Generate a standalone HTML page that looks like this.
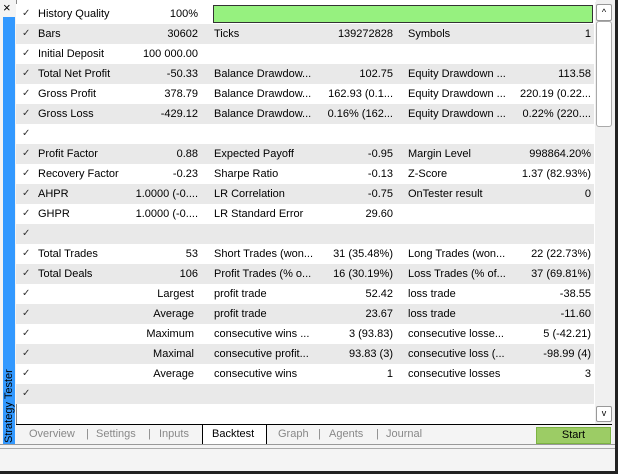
<!DOCTYPE html>
<html><head><meta charset="utf-8"><style>
*{margin:0;padding:0;box-sizing:border-box}
body{width:618px;height:474px;background:#f0f0f0;font-family:"Liberation Sans",sans-serif;font-size:11px;color:#000;position:relative;overflow:hidden}
.abs{position:absolute}
.row{position:absolute;left:16px;width:578px;height:20px;background:#fff}
.row.g{background:#e9e9e9}
.row span{position:absolute;top:4px;white-space:nowrap}
.ck{left:6px;font-size:10px;color:#333}
.r{text-align:right}
</style></head><body>
<div class="abs" style="left:0;top:0;width:16px;height:474px;background:#f4f4f4"></div>
<div class="abs" style="left:3px;top:1px;font-size:13px;line-height:13px">×</div>
<div class="abs" style="left:3px;top:17px;width:12px;height:427px;background:#3399ff"></div>
<div class="abs" style="left:3px;top:444px;transform:rotate(-90deg);transform-origin:0 0;width:90px;font-size:11px;color:#000;line-height:12px;padding-left:1px">Strategy Tester</div>
<div class="abs" style="left:16px;top:0;width:580px;height:424px;background:#fff;border-left:1px solid #888"></div>
<div id="rows"></div>
<div class="abs" style="left:213px;top:5px;width:380px;height:18px;background:#96f17f;border:1px solid #333"></div>
<div class="abs" style="left:595px;top:2px;width:18px;height:422px;background:#f0f0f0"></div>
<div class="abs" style="left:596px;top:4px;width:16px;height:17px;background:#fff;border:1px solid #999;border-radius:2px;font-size:9px;text-align:center;line-height:14px">^</div>
<div class="abs" style="left:596px;top:21px;width:16px;height:106px;background:#fff;border:1px solid #aaa;border-radius:3px"></div>
<div class="abs" style="left:596px;top:406px;width:16px;height:16px;background:#fff;border:1px solid #999;border-radius:2px;font-size:9px;text-align:center;line-height:12px">v</div>
<div class="abs" style="left:16px;top:424px;width:596px;height:20px;background:#f4f4f4;border-top:1px solid #000"></div>
<div class="abs" style="left:202px;top:424px;width:65px;height:20px;background:#fff;border:1px solid #000;border-bottom:none"></div>
<div class="abs" style="top:428px;left:0;width:618px;color:#888;font-size:11px">
<span class="abs" style="left:29px">Overview</span><span class="abs" style="left:86px">|</span>
<span class="abs" style="left:96px">Settings</span><span class="abs" style="left:148px">|</span>
<span class="abs" style="left:159px">Inputs</span>
<span class="abs" style="left:212px;color:#000">Backtest</span>
<span class="abs" style="left:278px">Graph</span><span class="abs" style="left:318px">|</span>
<span class="abs" style="left:329px">Agents</span><span class="abs" style="left:376px">|</span>
<span class="abs" style="left:386px">Journal</span></div>
<div class="abs" style="left:536px;top:427px;width:75px;height:17px;background:#9ccc65;border:1px solid #7cb342;text-align:center;line-height:15px;font-size:11px">Start</div>
<div class="abs" style="left:0;top:444px;width:616px;height:27px;background:#f4f4f4;border-top:1px solid #999"></div>
<div class="abs" style="left:0;top:448px;width:616px;height:1px;background:#aaa"></div>
<div class="abs" style="left:0;top:471px;width:618px;height:3px;background:#222"></div>
<div class="abs" style="left:615px;top:0;width:3px;height:474px;background:#222"></div>
<script>
var d=[
["History Quality","100%","","","",""],
["Bars","30602","Ticks","139272828","Symbols","1"],
["Initial Deposit","100 000.00","","","",""],
["Total Net Profit","-50.33","Balance Drawdow...","102.75","Equity Drawdown ...","113.58"],
["Gross Profit","378.79","Balance Drawdow...","162.93 (0.1...","Equity Drawdown ...","220.19 (0.22..."],
["Gross Loss","-429.12","Balance Drawdow...","0.16% (162...","Equity Drawdown ...","0.22% (220...."],
["","","","","",""],
["Profit Factor","0.88","Expected Payoff","-0.95","Margin Level","998864.20%"],
["Recovery Factor","-0.23","Sharpe Ratio","-0.13","Z-Score","1.37 (82.93%)"],
["AHPR","1.0000 (-0....","LR Correlation","-0.75","OnTester result","0"],
["GHPR","1.0000 (-0....","LR Standard Error","29.60","",""],
["","","","","",""],
["Total Trades","53","Short Trades (won...","31 (35.48%)","Long Trades (won...","22 (22.73%)"],
["Total Deals","106","Profit Trades (% o...","16 (30.19%)","Loss Trades (% of...","37 (69.81%)"],
["*Largest","","profit trade","52.42","loss trade","-38.55"],
["*Average","","profit trade","23.67","loss trade","-11.60"],
["*Maximum","","consecutive wins ...","3 (93.83)","consecutive losse...","5 (-42.21)"],
["*Maximal","","consecutive profit...","93.83 (3)","consecutive loss (...","-98.99 (4)"],
["*Average","","consecutive wins","1","consecutive losses","3"],
["","","","","",""]];
var h="";
d.forEach(function(r,i){
var y=4+i*20;
h+='<div class="row'+(i%2?' g':'')+'" style="top:'+y+'px"><span class="ck">✓</span>';
if(r[0][0]=="*")h+='<span class="r" style="right:400px">'+r[0].slice(1)+'</span>';
else h+='<span style="left:22px">'+r[0]+'</span>';
h+='<span class="r" style="right:396px">'+r[1]+'</span>';
h+='<span style="left:198px">'+r[2]+'</span>';
h+='<span class="r" style="right:201px">'+r[3]+'</span>';
h+='<span style="left:392px">'+r[4]+'</span>';
h+='<span class="r" style="right:3px">'+r[5]+'</span></div>';
});
document.getElementById("rows").innerHTML=h;
</script>
</body></html>
